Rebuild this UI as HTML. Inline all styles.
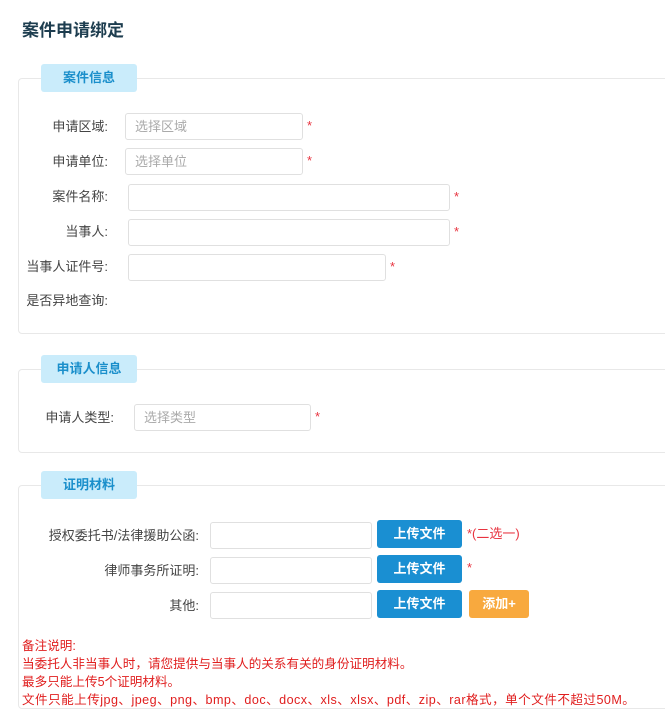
<!DOCTYPE html>
<html><head><meta charset="utf-8"><style>
*{margin:0;padding:0;box-sizing:border-box}
body{width:665px;height:718px;background:#fff;position:relative;overflow:hidden;font-family:"Liberation Sans","Noto Sans CJK SC",sans-serif;font-size:13px;color:#444}
.a{position:absolute}
h1{position:absolute;left:22px;top:16px;font-size:17px;font-weight:bold;color:#1d3d4f}
.box{position:absolute;left:18px;width:700px;border:1px solid #e8e8e8;border-radius:4px}
.tab{position:absolute;left:41px;width:96px;height:28px;background:#caecfb;border-radius:3px;color:#1b8fcb;font-weight:bold;font-size:13px;text-align:center;line-height:28px}
.lab{position:absolute;text-align:right;line-height:28px;white-space:nowrap}
.in{position:absolute;height:27px;border:1px solid #e0e0e0;border-radius:3px;color:#aaa;padding-left:9px;line-height:25px;font-size:13px;background:#fff}
.st{position:absolute;color:#e8333f;font-size:13px;line-height:26px}
.btn{position:absolute;width:85px;height:28px;background:#1a8fd2;color:#fff;font-weight:bold;border-radius:3px;text-align:center;line-height:28px}
.note{position:absolute;left:22px;color:#e01e1e;font-size:12.6px;line-height:18px;white-space:nowrap}
</style></head><body>
<h1>案件申请绑定</h1>
<div class="box" style="top:78px;height:256px"></div>
<div class="tab" style="top:64px">案件信息</div>
<div class="lab" style="right:557px;top:113px">申请区域:</div>
<div class="in" style="left:125px;top:113px;width:178px">选择区域</div><div class="st" style="left:307px;top:113px">*</div>
<div class="lab" style="right:557px;top:148px">申请单位:</div>
<div class="in" style="left:125px;top:148px;width:178px">选择单位</div><div class="st" style="left:307px;top:148px">*</div>
<div class="lab" style="right:557px;top:183px">案件名称:</div>
<div class="in" style="left:128px;top:184px;width:322px"></div><div class="st" style="left:454px;top:184px">*</div>
<div class="lab" style="right:557px;top:218px">当事人:</div>
<div class="in" style="left:128px;top:219px;width:322px"></div><div class="st" style="left:454px;top:219px">*</div>
<div class="lab" style="right:557px;top:253px">当事人证件号:</div>
<div class="in" style="left:128px;top:254px;width:258px"></div><div class="st" style="left:390px;top:254px">*</div>
<div class="lab" style="right:557px;top:287px">是否异地查询:</div>

<div class="box" style="top:369px;height:84px"></div>
<div class="tab" style="top:355px">申请人信息</div>
<div class="lab" style="right:551px;top:404px">申请人类型:</div>
<div class="in" style="left:134px;top:404px;width:177px">选择类型</div><div class="st" style="left:315px;top:404px">*</div>

<div class="box" style="top:485px;height:224px"></div>
<div class="tab" style="top:471px">证明材料</div>
<div class="lab" style="right:466px;top:522px">授权委托书/法律援助公函:</div>
<div class="in" style="left:210px;top:522px;width:162px"></div>
<div class="btn" style="left:377px;top:520px">上传文件</div>
<div class="st" style="left:467px;top:521px">*(二选一)</div>
<div class="lab" style="right:466px;top:557px">律师事务所证明:</div>
<div class="in" style="left:210px;top:557px;width:162px"></div>
<div class="btn" style="left:377px;top:555px">上传文件</div>
<div class="st" style="left:467px;top:555px">*</div>
<div class="lab" style="right:466px;top:592px">其他:</div>
<div class="in" style="left:210px;top:592px;width:162px"></div>
<div class="btn" style="left:377px;top:590px">上传文件</div>
<div class="btn" style="left:469px;top:590px;width:60px;background:#f8a93e">添加+</div>
<div class="note" style="top:637px">备注说明:<br>当委托人非当事人时，请您提供与当事人的关系有关的身份证明材料。<br>最多只能上传5个证明材料。<br><span style="letter-spacing:0.45px">文件只能上传jpg、jpeg、png、bmp、doc、docx、xls、xlsx、pdf、zip、rar格式，单个文件不超过50M。</span></div>
</body></html>
